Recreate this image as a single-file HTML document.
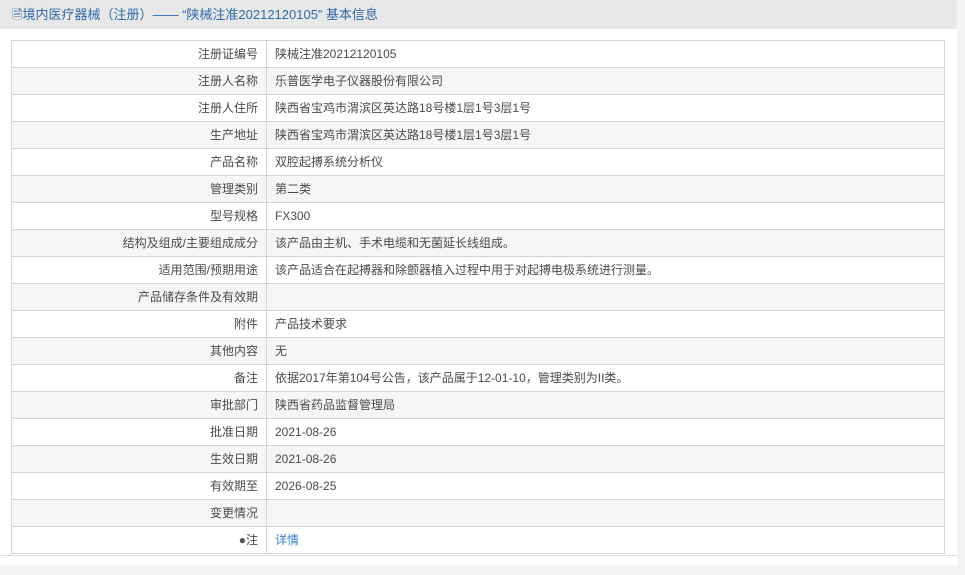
<!DOCTYPE html>
<html><head><meta charset="utf-8"><style>
body{margin:0;width:965px;height:575px;background:#f4f4f4;font-family:"Liberation Sans","Noto Sans CJK SC",sans-serif;overflow:hidden}
.wrap{position:absolute;left:0;top:0;width:957px;height:565px;background:#fff}
.hd{height:29px;background:#e8e8e8;color:#3068a8;font-size:13px;line-height:30px;padding-left:12px}
table{position:absolute;left:11px;top:40px;width:934px;border-collapse:collapse;font-size:12px;color:#4a4a4a}
td{border:1px solid #d3d3d3;height:26px;padding:0 8px;line-height:26px}
td.l{width:238px;text-align:right}
tr:nth-child(even) td{background:#f6f6f6}
a{color:#3a7fd0;text-decoration:none}
.bottom{position:absolute;left:0;top:555px;width:957px;border-top:1px solid #ddd}
</style></head><body><div class="wrap">
<div class="hd">🗎境内医疗器械（注册）—— “陕械注准20212120105” 基本信息</div>
<table>
<tr><td class="l">注册证编号</td><td>陕械注准20212120105</td></tr>
<tr><td class="l">注册人名称</td><td>乐普医学电子仪器股份有限公司</td></tr>
<tr><td class="l">注册人住所</td><td>陕西省宝鸡市渭滨区英达路18号楼1层1号3层1号</td></tr>
<tr><td class="l">生产地址</td><td>陕西省宝鸡市渭滨区英达路18号楼1层1号3层1号</td></tr>
<tr><td class="l">产品名称</td><td>双腔起搏系统分析仪</td></tr>
<tr><td class="l">管理类别</td><td>第二类</td></tr>
<tr><td class="l">型号规格</td><td>FX300</td></tr>
<tr><td class="l">结构及组成/主要组成成分</td><td>该产品由主机、手术电缆和无菌延长线组成。</td></tr>
<tr><td class="l">适用范围/预期用途</td><td>该产品适合在起搏器和除颤器植入过程中用于对起搏电极系统进行测量。</td></tr>
<tr><td class="l">产品储存条件及有效期</td><td></td></tr>
<tr><td class="l">附件</td><td>产品技术要求</td></tr>
<tr><td class="l">其他内容</td><td>无</td></tr>
<tr><td class="l">备注</td><td>依据2017年第104号公告，该产品属于12-01-10，管理类别为II类。</td></tr>
<tr><td class="l">审批部门</td><td>陕西省药品监督管理局</td></tr>
<tr><td class="l">批准日期</td><td>2021-08-26</td></tr>
<tr><td class="l">生效日期</td><td>2021-08-26</td></tr>
<tr><td class="l">有效期至</td><td>2026-08-25</td></tr>
<tr><td class="l">变更情况</td><td></td></tr>
<tr><td class="l"><span style="color:#555">●</span>注</td><td><a>详情</a></td></tr>
</table>
<div class="bottom"></div>
</div></body></html>
